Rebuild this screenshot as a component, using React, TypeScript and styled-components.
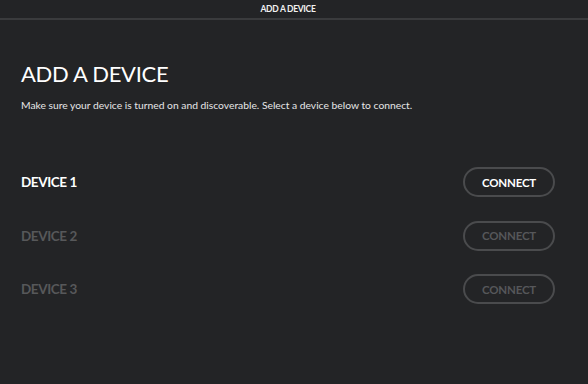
import React from "react";
import styled, { createGlobalStyle } from "styled-components";

const GlobalStyle = createGlobalStyle`
  html, body {
    margin: 0;
    padding: 0;
    background: #232426;
  }
  body {
    font-family: Lato, "Noto Sans", sans-serif;
    color: #fff;
  }
`;

const Page = styled.div`
  width: 588px;
  height: 384px;
  background: #232426;
  display: flex;
  flex-direction: column;
`;

const TitleBar = styled.div`
  height: 18px;
  padding-right: 12px;
  border-bottom: 2px solid #3a3b3d;
  display: flex;
  align-items: center;
  justify-content: center;
  font-size: 8.5px;
  font-weight: 700;
  letter-spacing: -0.3px;
  color: #f2f2f2;
`;

const Content = styled.div`
  padding: 40px 33px 0 21px;
  display: flex;
  flex-direction: column;
`;

const Heading = styled.h1`
  margin: 0;
  font-size: 22px;
  font-weight: 400;
  letter-spacing: -0.3px;
  color: #fff;
  line-height: 28px;
`;

const Subtitle = styled.p`
  margin: 11px 0 0;
  font-size: 10.3px;
  color: #e6e6e6;
  line-height: 12px;
`;

const DeviceList = styled.div`
  margin-top: 56px;
  display: flex;
  flex-direction: column;
  gap: 23.5px;
`;

const Row = styled.div`
  display: flex;
  align-items: center;
  justify-content: space-between;
  height: 30px;
`;

const DeviceName = styled.span<{ $active: boolean }>`
  font-size: 13.5px;
  font-weight: 700;
  letter-spacing: -0.4px;
  color: ${(p) => (p.$active ? "#ffffff" : "#57585a")};
`;

const ConnectButton = styled.button<{ $active: boolean }>`
  width: 92px;
  height: 30px;
  border-radius: 15px;
  border: 2px solid #4a4b4d;
  background: transparent;
  font-family: Lato, "Noto Sans", sans-serif;
  font-size: 11.5px;
  font-weight: 700;
  letter-spacing: -0.2px;
  color: ${(p) => (p.$active ? "#ffffff" : "#56575a")};
  cursor: pointer;
  padding: 0;
`;

const devices = [
  { name: "DEVICE 1", active: true },
  { name: "DEVICE 2", active: false },
  { name: "DEVICE 3", active: false },
];

const App = () => {
  return (
    <>
      <GlobalStyle />
      <Page>
        <TitleBar>ADD A DEVICE</TitleBar>
        <Content>
          <Heading>ADD A DEVICE</Heading>
          <Subtitle>
            Make sure your device is turned on and discoverable. Select a device below to connect.
          </Subtitle>
          <DeviceList>
            {devices.map((d) => (
              <Row key={d.name}>
                <DeviceName $active={d.active}>{d.name}</DeviceName>
                <ConnectButton $active={d.active}>CONNECT</ConnectButton>
              </Row>
            ))}
          </DeviceList>
        </Content>
      </Page>
    </>
  );
};

export default App;
